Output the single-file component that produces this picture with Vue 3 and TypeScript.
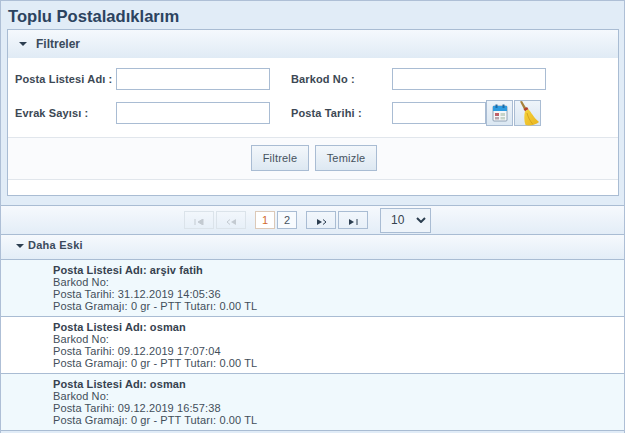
<script setup lang="ts">
interface Row { name: string; date: string; alt: boolean }
const rows: Row[] = [
  { name: 'arşiv fatih', date: '31.12.2019 14:05:36', alt: true },
  { name: 'osman', date: '09.12.2019 17:07:04', alt: false },
  { name: 'osman', date: '09.12.2019 16:57:38', alt: true }
]
</script>

<template>
  <div class="page">
    <h1 class="title">Toplu Postaladıklarım</h1>
    <section class="panel">
      <header class="panel-head"><i class="tri"></i><span>Filtreler</span></header>
      <div class="form">
        <label class="l1">Posta Listesi Adı :</label>
        <input class="inp" />
        <label class="l2">Barkod No :</label>
        <input class="inp" />
        <label class="l1">Evrak Sayısı :</label>
        <input class="inp" />
        <label class="l2">Posta Tarihi :</label>
        <div class="date">
          <input class="inp short" />
          <span class="icon-btn">
            <svg width="20" height="20" viewBox="0 0 20 20">
              <rect x="3" y="3" width="14" height="15" rx="1" fill="#f4f6f8" stroke="#7b8fa3" stroke-width="0.8"/>
              <rect x="3" y="3" width="14" height="5" fill="#2e9be0"/>
              <rect x="5.5" y="1.5" width="2" height="3.5" fill="#1d6aa5"/>
              <rect x="12.5" y="1.5" width="2" height="3.5" fill="#1d6aa5"/>
              <rect x="5" y="10" width="4" height="3" fill="#c0606a"/>
              <rect x="10.5" y="10" width="4.5" height="3" fill="#c6d3c8"/>
              <rect x="5" y="14" width="4" height="2.5" fill="#b9a6ae"/>
              <rect x="10.5" y="14" width="4.5" height="2.5" fill="#c6d3c8"/>
            </svg>
          </span>
          <span class="icon-btn broom">
            <svg width="25" height="25" viewBox="0 0 25 25">
              <defs>
                <linearGradient id="bristle" x1="0" y1="0" x2="1" y2="1">
                  <stop offset="0" stop-color="#f6d23a"/>
                  <stop offset="1" stop-color="#e8b420"/>
                </linearGradient>
              </defs>
              <path d="M5 0.5 L7 0 L11.5 7.5 L9.2 8.8 Z" fill="#a8823c"/>
              <path d="M8.5 8 L12 6 L13.5 8.3 L10 10.3 Z" fill="#b5402a"/>
              <path d="M10 10.3 L13.5 8.3 C16 11 19 17 24 21 C21 24 14 25 10.5 24 C9 20 9 14 10 10.3 Z" fill="url(#bristle)"/>
              <path d="M12 12 C13 16 15 20 18 23.5" stroke="#cf9c1c" stroke-width="0.8" fill="none"/>
            </svg>
          </span>
        </div>
      </div>
      <div class="actions">
        <button class="btn b1">Filtrele</button>
        <button class="btn b2">Temizle</button>
      </div>
      <div class="panel-foot"></div>
    </section>

    <nav class="pager">
      <span class="pg off nav">
        <svg width="10" height="6" viewBox="0 0 10 6"><path d="M1 0v6M9 0v6L4 3z" stroke="#c3cad1" fill="#c3cad1"/></svg>
      </span>
      <span class="pg off nav second">
        <svg width="11" height="6" viewBox="0 0 11 6"><path d="M4 0.5 L1 3 L4 5.5" stroke="#c3cad1" fill="none"/><path d="M10 0v6L5 3z" fill="#c3cad1"/></svg>
      </span>
      <span class="pg num cur">1</span>
      <span class="pg num">2</span>
      <span class="pg nav dark third">
        <svg width="11" height="6" viewBox="0 0 11 6"><path d="M1 0v6L6 3z" fill="#2c3e50"/><path d="M7 0.5 L10 3 L7 5.5" stroke="#2c3e50" fill="none"/></svg>
      </span>
      <span class="pg nav dark">
        <svg width="10" height="6" viewBox="0 0 10 6"><path d="M1 0v6L6 3z" fill="#2c3e50"/><path d="M9 0v6" stroke="#2c3e50"/></svg>
      </span>
      <span class="size">
        <span>10</span>
        <svg width="10" height="6" viewBox="0 0 10 6"><path d="M1 1 L5 5 L9 1" stroke="#2c3e50" stroke-width="2" fill="none"/></svg>
      </span>
    </nav>

    <div class="group"><i class="tri small"></i><span>Daha Eski</span></div>

    <ul class="list">
      <li v-for="(r, i) in rows" :key="i" class="item" :class="{ alt: r.alt }">
        <strong>Posta Listesi Adı: {{ r.name }}</strong>
        <span>Barkod No:</span>
        <span>Posta Tarihi: {{ r.date }}</span>
        <span>Posta Gramajı: 0 gr - PTT Tutarı: 0.00 TL</span>
      </li>
    </ul>
  </div>
</template>

<style>
html, body { margin: 0; background: #fff; overflow: hidden; }
</style>

<style scoped>
.page {
  box-sizing: border-box;
  width: 625px;
  height: 433px;
  overflow: hidden;
  background: #e1ecf7;
  border: 1px solid #aebfd6;
  border-bottom: 0;
  font-family: Arial, "Liberation Sans", sans-serif;
  color: #36424f;
}
.title {
  margin: 0;
  height: 28px;
  padding-left: 7px;
  font-size: 16.6px;
  line-height: 32px;
  font-weight: 700;
  color: #2c435f;
}
.panel {
  box-sizing: border-box;
  margin: 0 5px 0 6px;
  height: 167px;
  background: #fff;
  border: 1px solid #a9bcd3;
}
.panel-head {
  display: flex;
  align-items: center;
  gap: 9px;
  height: 28px;
  padding-left: 11px;
  font-size: 12px;
  font-weight: 700;
  color: #3b4a5c;
  background: linear-gradient(#f5f9fd, #e0ebf5);
}
.tri {
  width: 0;
  height: 0;
  border-left: 4px solid transparent;
  border-right: 4px solid transparent;
  border-top: 4px solid #2c3e50;
}
.tri.small { margin-top: 2px; }
.form {
  display: grid;
  grid-template-columns: 101px 154px 122px 1fr;
  grid-auto-rows: 22px;
  row-gap: 12px;
  column-gap: 0;
  align-items: center;
  height: 79px;
  box-sizing: border-box;
  padding: 10px 0 0 7px;
}
label {
  font-size: 11px;
  font-weight: 700;
  letter-spacing: 0.13px;
  white-space: nowrap;
  color: #3c4854;
}
.l2 { padding-left: 21px; }
.inp {
  box-sizing: border-box;
  width: 154px;
  height: 22px;
  margin: 0;
  padding: 0;
  background: #fff;
  border: 1px solid #a9bcd3;
}
.inp.short { width: 94px; }
.date { display: flex; align-items: center; }
.icon-btn {
  box-sizing: border-box;
  display: flex;
  align-items: center;
  justify-content: center;
  flex: none;
  width: 27px;
  height: 26px;
  background: linear-gradient(#eef4fa, #dbe7f2);
  border: 1px solid #a9bcd3;
}
.icon-btn.broom { margin-left: 1px; }
.actions {
  display: flex;
  justify-content: center;
  gap: 6px;
  box-sizing: border-box;
  height: 43px;
  padding: 7px 0 0 2px;
  background: #fafbfd;
  border-top: 1px solid #e1e6ec;
  border-bottom: 1px solid #e1e6ec;
}
.btn {
  box-sizing: border-box;
  height: 26px;
  padding: 0;
  font: 11px Arial, "Liberation Sans", sans-serif;
  letter-spacing: 0.2px;
  color: #46525e;
  background: linear-gradient(#f3f7fb, #dde8f2);
  border: 1px solid #a9bcd3;
}
.b1 { width: 58px; }
.b2 { width: 62px; }
.panel-foot { height: 15px; }
.pager {
  display: flex;
  align-items: center;
  box-sizing: border-box;
  height: 30px;
  margin-top: 9px;
  padding-left: 183px;
  background: linear-gradient(#f6f9fd, #e3edf7);
  border-top: 1px solid #a9bcd3;
  border-bottom: 1px solid #a9bcd3;
}
.pg {
  box-sizing: border-box;
  display: flex;
  align-items: center;
  justify-content: center;
  height: 18px;
  font-size: 11px;
  border: 1px solid #a9bcd3;
  color: #46525e;
}
.nav { width: 30px; padding-top: 4px; }
.off { border-color: #dbe3ea; }
.second { margin-left: 2px; }
.num { width: 20px; background: #f8fbfe; margin-left: 2px; }
.second + .num { margin-left: 9px; }
.cur { background: #fff; color: #d26a2d; border-color: #dcc9b8; }
.third { margin-left: 9px; }
.dark { margin-right: 2px; }
.size {
  box-sizing: border-box;
  display: flex;
  align-items: center;
  justify-content: space-between;
  width: 51px;
  height: 25px;
  margin-left: 10px;
  padding: 0 4px 0 10px;
  font-size: 12px;
  color: #36424f;
  background: #eef4fa;
  border: 1px solid #a9bcd3;
}
.group {
  display: flex;
  align-items: center;
  gap: 4px;
  box-sizing: border-box;
  height: 25px;
  padding: 0 0 5px 15px;
  font-size: 11px;
  font-weight: 700;
  letter-spacing: 0.25px;
  color: #3b4a5c;
  background: linear-gradient(#f6f9fd, #e3edf7);
  border-bottom: 1px solid #a9bcd3;
}
.list { margin: 0; padding: 0; list-style: none; background: #eef8fd; }
.item {
  box-sizing: border-box;
  display: flex;
  flex-direction: column;
  height: 57px;
  padding: 4px 0 0 52px;
  font-size: 11px;
  line-height: 12px;
  letter-spacing: 0.1px;
  color: #424e5a;
  background: #fff;
  border-bottom: 1px solid #a9bcd3;
}
.item.alt { background: #f0f9fd; }
.item strong { color: #36424f; }
</style>
